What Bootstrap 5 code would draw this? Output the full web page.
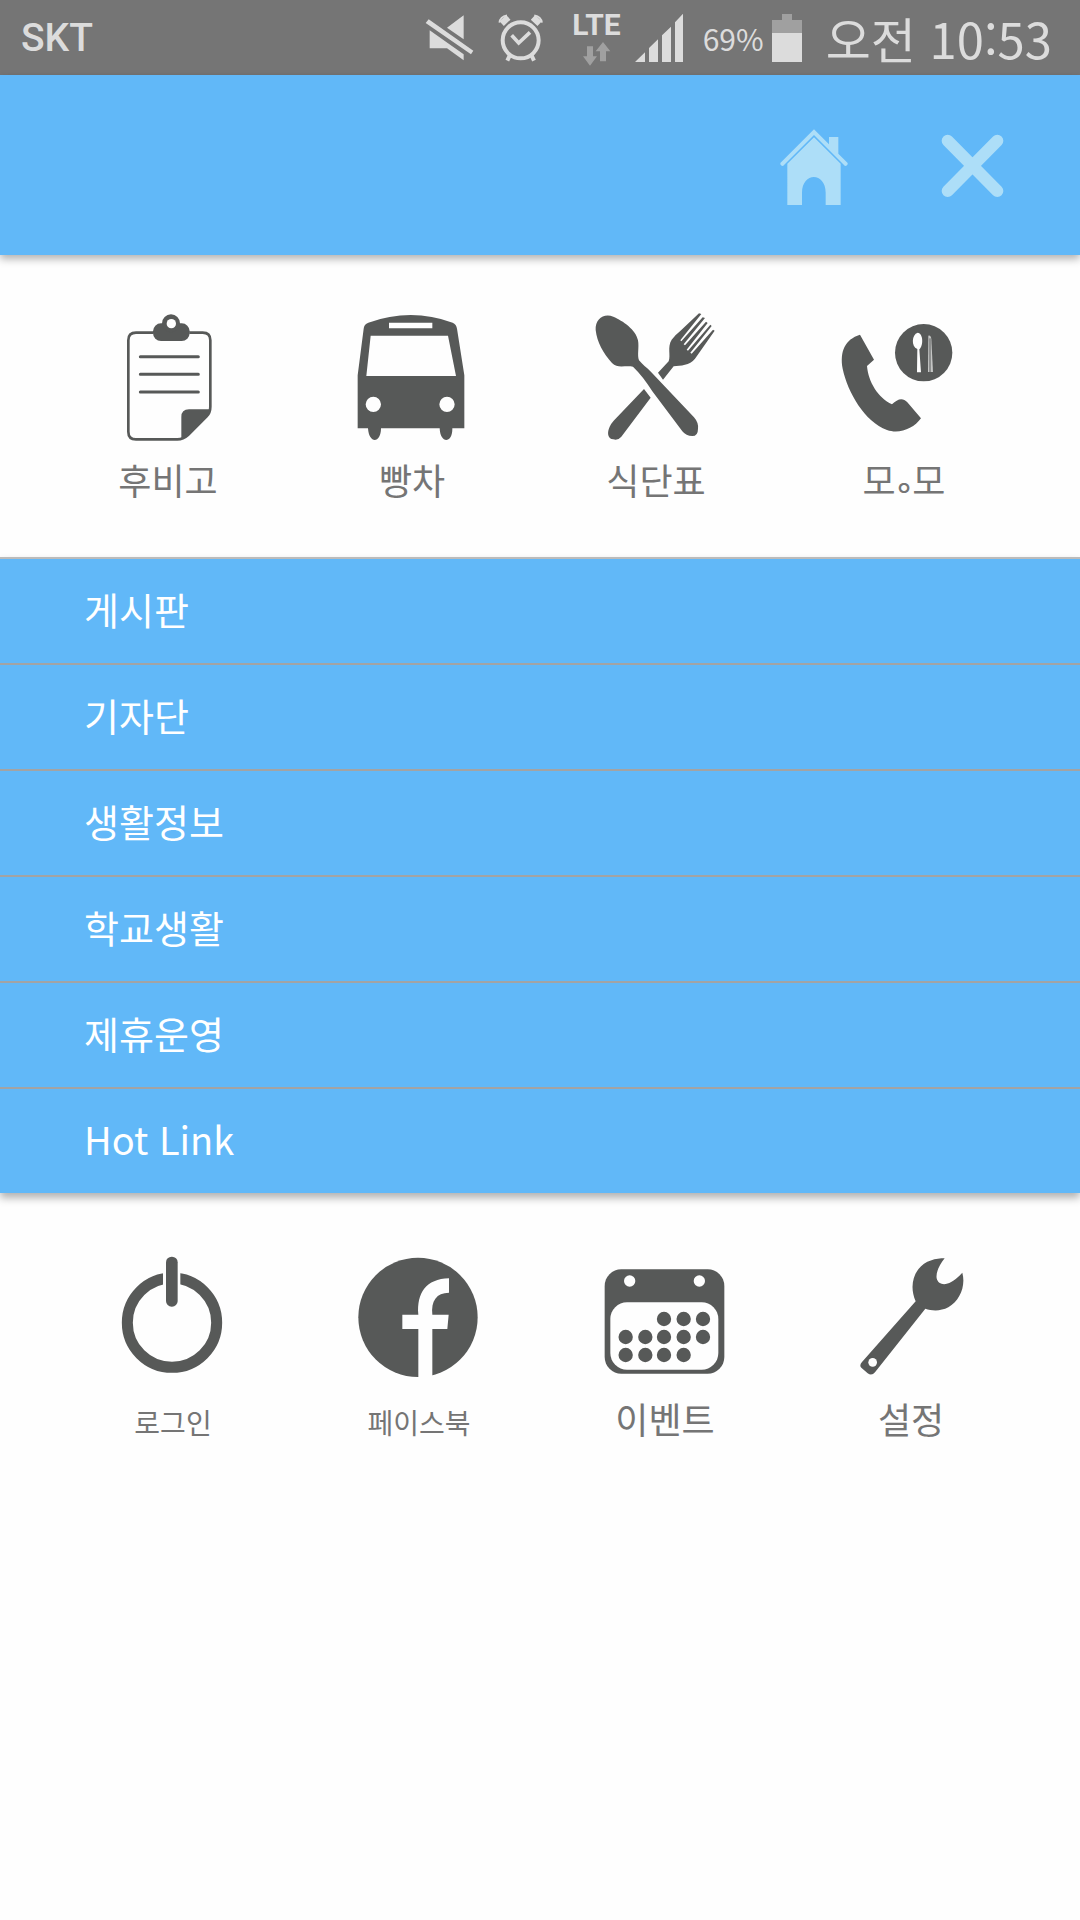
<!DOCTYPE html>
<html lang="ko">
<head>
<meta charset="utf-8">
<meta name="viewport" content="width=device-width, initial-scale=1">
<title>메뉴</title>
<link href="https://cdn.jsdelivr.net/npm/bootstrap@5.3.0/dist/css/bootstrap.min.css" rel="stylesheet">
<style>
  body { background: #fefefe; font-family: "Noto Sans CJK KR", sans-serif; color: #757575; }
  svg { display: block; flex: none; }
  .status-bar { background: #757575; color: #dcdcdc; height: 75px; padding: 0 28px 0 21px; line-height: 1; }
  .carrier { font: 500 39px/48px Roboto, sans-serif; }
  .net { font: 700 30px/30px Roboto, sans-serif; margin: 0 14px 0 28px; }
  .net svg { margin-top: 2px; }
  .percent { font-size: 30px; margin-left: 20px; }
  .clock { font-size: 49px; }
  .top-bar { background: #61b8f8; height: 180px; padding: 0 76px; gap: 93px; position: relative; box-shadow: 0 4px 8px rgba(0,0,0,.3); }
  .top-bar svg { fill: #addef8; }
  .tiles { fill: #575958; }
  .tiles-main { padding: 53px 58px 52px 46px; }
  .tiles-more { padding: 58px 46px 0 50px; }
  .tile { color: #757575; text-decoration: none; font-size: 36px; line-height: 51px; }
  .tile-name { margin-top: 6px; }
  .tiles-more .tile-name { margin-top: 2px; }
  .tiles-more .tile-light .tile-name { margin-top: 6px; font-size: 28px; }
  .tiny-ring { font-size: 18px; line-height: 1; font-weight: 700; }
  .menu { border-top: 2px solid #bbb; box-shadow: 0 5px 8px rgba(0,0,0,.3); }
  .menu .list-group-item { background: #61b8f8; color: #fff; border: 0; border-bottom: 2px solid #a3a3a3; padding: 22px 84px 26px; font-size: 38px; line-height: 56px; }
</style>
</head>
<body>
<div class="status-bar d-flex align-items-center">
  <span class="carrier me-auto">SKT</span>
  <svg class="me-4" width="49" height="50" viewBox="73 38 147 150" fill="#dcdcdc"><path d="M84 57L218 151 211 162 75 68zM189 45V117L139 82zM87 90L141 128 189 162V180L139 144H87z"/></svg>
  <svg width="46" height="50" viewBox="295 38 138 150" fill="none" stroke="#dcdcdc"><circle cx="363" cy="120" r="54" stroke-width="12"/><path d="M336 105L357 128 391 96" stroke-width="11"/><path d="M306 70L326 51M420 70L400 51" stroke-width="19"/><path d="M299 67Q301 49 322 45M427 67Q425 49 404 45" stroke-width="5"/><path d="M330 166L323 181M396 166L403 181" stroke-width="12"/></svg>
  <span class="net d-flex flex-column align-items-center">LTE
    <svg width="28" height="24" viewBox="552 119 84 72" fill="#a0a0a0"><path d="M564 132H582V162H594L573 190 552 162H564zM603 177V147H590L612 119 634 147H621V177z"/></svg></span>
  <svg width="48" height="50" viewBox="696 36 144 150" fill="#dcdcdc"><path d="M696 183L726 154V183zM738 183V141L765 115V183zM777 183V103L804 77V183zM816 183V64L840 38V183z"/></svg>
  <span class="percent">69%</span>
  <svg class="ms-2" width="30" height="48" viewBox="1107 36 90 144"><path d="M1107 93V54H1137V36H1167V54H1197V93z" fill="#a0a0a0"/><path d="M1107 93H1197V180H1107z" fill="#dcdcdc"/></svg>
  <span class="clock ms-4">오전 10:53</span>
</div>

<header class="top-bar d-flex align-items-center justify-content-end">
  <a href="#" aria-label="홈"><svg width="68" height="80" viewBox="120 375 204 240"><path d="M222 388L267 433V411H295V461L323 489Q324 497 315 498L222 405 129 498Q120 497 121 489zM222 412L302 491V615H257V578C257 515 186 515 186 578V615H142V491z"/></svg></a>
  <button type="button" class="btn p-0 border-0" aria-label="닫기"><svg width="63" height="63" viewBox="603 400 189 189"><path d="M623 420L772 571M772 420L623 571" stroke="#addef8" stroke-width="36" stroke-linecap="round"/></svg></button>
</header>

<main>
  <nav class="tiles tiles-main" aria-label="주요 메뉴">
    <div class="row g-0">
      <a href="#" class="tile col d-flex flex-column align-items-center"><svg width="140" height="140" viewBox="24 54 420 420"><rect x="189" y="100" width="110" height="53" rx="24"/><circle cx="243" cy="100" r="27"/><circle cx="244" cy="101" r="14" fill="#fefefe"/><path d="M190 128H138Q115 128 115 151V425Q115 448 138 448H262Q280 448 294 435L350 379Q361 368 361 350V151Q361 128 338 128H298" fill="none" stroke="#575958" stroke-width="8"/><path d="M274 446V381Q274 358 297 358H361Q361 368 350 379L294 435Q284 445 274 446z"/><path d="M151 200H325M151 253H325M151 306H325" stroke="#575958" stroke-width="9" stroke-linecap="round"/></svg><span class="tile-name">후비고</span></a>
      <a href="#" class="tile col d-flex flex-column align-items-center"><svg width="140" height="140" viewBox="756 54 420 420"><path fill-rule="evenodd" d="M821 116Q822 103 835 98Q963 52 1088 98Q1099 103 1101 116L1123 256V415H1087C1088 460 1051 463 1049 415H873C873 460 837 463 834 415H803V256zM897 98V115H1027V98zM842 137L829 258H1098L1074 137zM873 343A23 23 0 1 0 827 343A23 23 0 1 0 873 343M1094 343A23 23 0 1 0 1048 343A23 23 0 1 0 1094 343"/></svg><span class="tile-name">빵차</span></a>
      <a href="#" class="tile col d-flex flex-column align-items-center"><svg width="140" height="140" viewBox="78 54 420 420"><path d="M107 120C105 87 132 68 160 80C188 92 228 119 234 151C238 174 231 195 237 211C246 223 260 232 274 247L402 382Q416 398 414 416Q414 438 397 438Q378 438 367 424L277 304Q250 260 219 230C196 225 173 237 156 219C130 190 111 157 107 120zM252 297L272 323 184 440Q174 452 160 448C142 446 141 427 149 410Q153 401 161 392zM294 248L326 214C333 196 321 171 335 149Q347 134 360 124L417 70 424 72 361 151 364 154 428 82 435 84 371 163 375 166 438 95 443 99 380 179 384 182 451 104 455 108 391 188 395 191 459 119 464 122 405 206C389 227 362 226 341 229L309 269z"/></svg><span class="tile-name">식단표</span></a>
      <a href="#" class="tile col d-flex flex-column align-items-center"><svg width="140" height="140" viewBox="810 54 420 420"><path d="M900 134L942 209 921 228C925 276 954 323 996 343C1012 327 1028 321 1042 337L1083 385C1061 416 1018 433 981 420C914 395 863 307 848 236C839 184 855 148 900 134z"/><circle cx="1091" cy="188" r="86"/><path d="M1073 128C1091 131 1090 168 1078 178L1083 247H1071L1072 177C1053 170 1055 133 1073 128z" fill="#fefefe"/><path d="M1105 137Q1113 135 1114 148L1119 246H1104z" fill="#c5c6c5"/><path d="M1110 145V246" stroke="#575958" stroke-width="3"/></svg><span class="tile-name ps-2">모<span class="tiny-ring">ㅇ</span>모</span></a>
    </div>
  </nav>

  <nav class="menu list-group list-group-flush rounded-0" aria-label="게시판 메뉴">
    <a href="#" class="list-group-item">게시판</a>
    <a href="#" class="list-group-item">기자단</a>
    <a href="#" class="list-group-item">생활정보</a>
    <a href="#" class="list-group-item">학교생활</a>
    <a href="#" class="list-group-item">제휴운영</a>
    <a href="#" class="list-group-item">Hot Link</a>
  </nav>

  <nav class="tiles tiles-more" aria-label="기타 메뉴">
    <div class="row g-0">
      <a href="#" class="tile tile-light col d-flex flex-column align-items-center"><svg width="140" height="140" viewBox="39 66 420 420"><circle cx="246" cy="281" r="134" fill="none" stroke="#575958" stroke-width="33"/><path d="M219 110H271V190H219z" fill="#fefefe"/><rect x="228" y="83" width="35" height="150" rx="17"/></svg><span class="tile-name">로그인</span></a>
      <a href="#" class="tile tile-light col d-flex flex-column align-items-center"><svg width="140" height="140" viewBox="777 66 420 420"><circle cx="984" cy="265" r="179"/><path d="M985 448V300H937V257H985C980 192 1008 150 1077 148V191C1039 191 1023 216 1027 257H1076L1072 300H1027V448z" fill="#fefefe"/></svg><span class="tile-name">페이스북</span></a>
      <a href="#" class="tile col d-flex flex-column align-items-center"><svg width="140" height="140" viewBox="75 66 420 420"><rect x="104" y="121" width="359" height="313" rx="50"/><rect x="121" y="220" width="324" height="202" rx="50" fill="#fefefe"/><circle cx="179" cy="156" r="17" fill="#fefefe"/><circle cx="388" cy="156" r="17" fill="#fefefe"/><path d="M282 270h0M341 270h0M399 270h0M167 324h0M226 324h0M282 324h0M341 324h0M399 324h0M167 378h0M226 378h0M282 378h0M341 378h0" stroke="#575958" stroke-width="43" stroke-linecap="round"/></svg><span class="tile-name">이벤트</span></a>
      <a href="#" class="tile col d-flex flex-column align-items-center"><svg width="140" height="140" viewBox="813 66 420 420"><path d="M1124 88C1109 107 1097 129 1100 148C1104 166 1122 169 1138 162Q1158 152 1177 131C1188 172 1169 216 1135 235C1112 247 1086 246 1066 239L915 430Q905 442 893 433L874 416Q867 409 876 399L1037 217C1016 171 1031 119 1072 98Q1098 85 1124 88z"/><circle cx="908" cy="400" r="13" fill="#fefefe"/></svg><span class="tile-name">설정</span></a>
    </div>
  </nav>
</main>
<script src="https://cdn.jsdelivr.net/npm/bootstrap@5.3.0/dist/js/bootstrap.bundle.min.js"></script>
</body>
</html>
